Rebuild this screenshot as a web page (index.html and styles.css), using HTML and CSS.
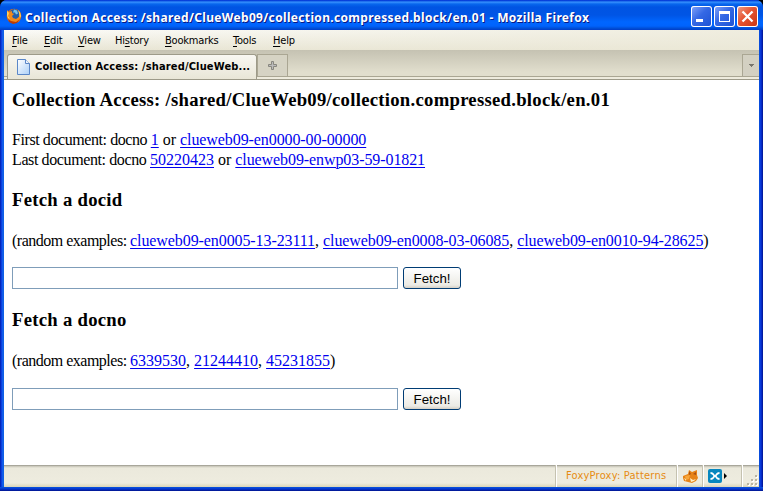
FILE: index.html
```html
<!DOCTYPE html>
<html lang="en">
<head>
<meta charset="utf-8">
<title>Collection Access</title>
<link rel="stylesheet" href="styles.css">
</head>
<body>
<div class="window">
  <header class="titlebar">
    <svg class="logo" width="16" height="16" viewBox="0 0 16 16"><circle cx="8" cy="8" r="7.3" fill="#e66a0c"/><circle cx="8.4" cy="6.3" r="5.2" fill="#245fa8"/><path d="M8 1.500l3 1 1 3-2 1-1-2-2 0z" fill="#75c5ed"/><path d="M1 2l2 2 3-1 0 2 2 1-2 2 1 2 3 1 3-2 1-4 1 3-2 5-5 2-5-2-2-5z" fill="#f28a1b"/><path d="M1 3l2 2-1 3 2 3-2-1-1-3zM12 2l2 2 1 4-1 2-1-5z" fill="#ffd35a"/><path d="M2 11l3 2 5 1 4-3-3 4-4 1-4-2z" fill="#b83b06"/></svg>
    <h1 class="title">Collection Access: /shared/ClueWeb09/collection.compressed.block/en.01 - Mozilla Firefox</h1>
    <div class="controls">
      <svg class="control" width="21" height="21" viewBox="0 0 21 21"><path d="M5 13h7v3H5z" fill="#fff"/></svg>
      <svg class="control" width="21" height="21" viewBox="0 0 21 21"><path d="M5 5h11v11H5zM6 8v7h9V8z" fill="#fff" fill-rule="evenodd"/></svg>
      <svg class="control close" width="21" height="21" viewBox="0 0 21 21"><path d="M5.500 5.500l10 10m0-10l-10 10" stroke="#fff" stroke-width="2.300"/></svg>
    </div>
  </header>
  <nav class="menu">
    <span class="m-file"><u>F</u>ile</span><span class="m-edit"><u>E</u>dit</span><span class="m-view"><u>V</u>iew</span><span class="m-history">Hi<u>s</u>tory</span><span class="m-bookmarks"><u>B</u>ookmarks</span><span class="m-tools"><u>T</u>ools</span><span class="m-help"><u>H</u>elp</span>
  </nav>
  <div class="tabs">
    <div class="tab">
      <svg width="14" height="17" viewBox="0 0 14 17"><defs><linearGradient id="page" x2="1" y2="1"><stop stop-color="#fff"/><stop offset="1" stop-color="#acd0f8"/></linearGradient></defs><path d="M.5.5h8l4 4v11H.5z" fill="url(#page)" stroke="#5b87c8"/><path d="M8.500.5v4h4" fill="#eaf4ff" stroke="#5b87c8"/></svg>
      <span class="tab-name">Collection Access: /shared/ClueWeb...</span>
    </div>
    <div class="new-tab"><svg width="9" height="9" viewBox="0 0 9 9"><path d="M3.500.5h2v3h3v2h-3v3h-2v-3h-3v-2h3z" fill="#bbb" stroke="#88877f"/></svg></div>
    <div class="tab-list"><svg width="5" height="3" viewBox="0 0 5 3"><path d="M0 0h5v1H4v1H3v1H2V2H1V1H0z" fill="#77756c"/></svg></div>
  </div>
  <main class="page">
    <h2 class="heading">Collection Access: /shared/ClueWeb09/collection.compressed.block/en.01</h2>
    <p class="docs"><span class="lead">First document: docno </span><a>1</a> or <a class="id">clueweb09-en0000-00-00000</a><br><span class="lead last">Last document: docno </span><a>50220423</a> or <a class="id">clueweb09-enwp03-59-01821</a></p>
    <h2 class="fetch">Fetch a docid</h2>
    <p class="examples"><span class="prompt">(random examples: </span><a class="id">clueweb09-en0005-13-23111</a>, <a class="id">clueweb09-en0008-03-06085</a>, <a class="id">clueweb09-en0010-94-28625</a>)</p>
    <form class="form"><input type="text" aria-label="docid"><button type="button">Fetch!</button></form>
    <h2 class="fetch second">Fetch a docno</h2>
    <p class="examples"><span class="prompt">(random examples: </span><a>6339530</a>, <a>21244410</a>, <a>45231855</a>)</p>
    <form class="form lower"><input type="text" aria-label="docno"><button type="button">Fetch!</button></form>
  </main>
  <footer class="status">
    <div class="proxy">FoxyProxy: Patterns</div>
    <div class="fox"><svg width="17" height="16" viewBox="0 0 17 16"><path d="M1 8l5-2 1-4 3 2 5-2v5l1 3-2 3-4 2-4-1-4-1-1-3z" fill="#e78316"/><path d="M7 3l2 3-2 1zM14 4l-3 2 3 1z" fill="#ac5010"/><path d="M2 10l2 1v2zM8 10l3 2 3-1-2 2-3 1z" fill="#fff0c4"/><path d="M3 8l5-1-1 4-3 1z" fill="#f7a63b"/></svg></div>
    <div class="addon"><svg width="20" height="14" viewBox="0 0 20 14"><rect width="14" height="14" rx="2" fill="#0787bf"/><path d="M2.500 3C6 3 6 6 7 6s1-3 4.500-3v2C9.500 5 9.500 6 8.500 7c1 1 1 2 3 2v2C8 11 8 8 7 8s-1 3-4.500 3V9c2 0 2-1 3-2-1-1-1-2-3-2z" fill="#fff"/><path d="M16 4v6l3-3z"/></svg></div>
    <div class="grip"><svg width="11" height="11" viewBox="0 0 11 11"><path d="M8 0h2v2H8zM4 4h2v2H4zM8 4h2v2H8zM0 8h2v2H0zM4 8h2v2H4zM8 8h2v2H8z" fill="#b8b4a2"/><path d="M10 1h1v2H9V2h1zM6 5h1v2H5V6h1zM10 5h1v2H9V6h1zM2 9h1v2H1v-1h1zM6 9h1v2H5v-1h1zM10 9h1v2H9v-1h1z" fill="#fff"/></svg></div>
  </footer>
</div>
</body>
</html>
```
FILE: styles.css
```css
* { box-sizing: border-box; }
html { background: #000; }
body { margin: 0; overflow: hidden; }
h1, h2, p { margin: 0; white-space: nowrap; }
.window {
  width: 763px; height: 491px; display: flex; flex-direction: column;
  overflow: hidden; border-radius: 7px 7px 0 0; padding: 0 4px;
  background: linear-gradient(transparent 487px, #0855dd 487px, #0636cf 489px, #00138c 491px), linear-gradient(90deg, #001ea0 0, #0831d9 1px, #166aee 3px, #0855dd 4px, #0855dd 759px, #0831d9 761px, #00138c 763px);
}
.titlebar {
  height: 30px; flex: none; margin: 0 -4px; padding: 0 5px 0 6px; display: flex; align-items: center;
  background: linear-gradient(#0831d9 0, #0750dd 1px, #3a92ff 2px, #0867ed 4px, #0054e3 7px, #0055e5 15px, #0066ff 22px, #0063fc 26px, #0048cc 29px, #003bcc);
}
.logo { flex: none; margin-top: 1px; }
.title {
  flex: 1; margin: 5px 0 0 3px; color: #fff; font: bold 12px/18px "Noto Sans", sans-serif;
  letter-spacing: .335px; text-shadow: 1px 1px #0a1883;
}
.controls { display: flex; gap: 2px; margin-top: 3px; }
.control { display: block; border-radius: 3px; box-shadow: inset 0 0 0 1px #fff; background: linear-gradient(135deg, #85a5fa, #3468e5 45%, #1c51d3); }
.close { background: linear-gradient(135deg, #efa08a, #e65432 45%, #c83310); }
.menu {
  height: 20px; flex: none; display: flex; align-items: center; padding: 1px 0 0 8px;
  background: linear-gradient(90deg, transparent, rgba(236, 233, 216, .8)), linear-gradient(#fbfbf8, #e8e5d4);
  font: 11px/18px "DejaVu Sans Condensed", sans-serif; color: #000;
}
.menu span { display: block; white-space: nowrap; letter-spacing: -.2px; }
.menu u { text-underline-offset: 2px; text-decoration-thickness: 1px; }
.m-file { width: 32px; }
.m-edit { width: 34px; }
.m-view { width: 37px; }
.m-history { width: 50px; }
.m-bookmarks { width: 68px; }
.m-tools { width: 40px; }
.tabs {
  height: 30px; flex: none; display: flex; padding-top: 4px; align-items: flex-start;
  background: linear-gradient(transparent 26px, #aaa693 26px, #aaa693 27px, #eeebdd 27px, #eeebdd 29px, #9d9a89 29px), linear-gradient(#c5c2b2, #e1decd 22px);
}
.tab {
  width: 250px; height: 25px; margin-left: 3px; padding: 0 0 0 9px; display: flex; align-items: center; gap: 4px;
  border: 1px solid #9d9a89; border-bottom: 0; border-radius: 3px 3px 0 0; background: linear-gradient(#f8f7f2, #e9e6d7);
}
.tab-name { font: bold 11px/18px "DejaVu Sans Condensed", sans-serif; letter-spacing: .15px; white-space: nowrap; }
.new-tab { width: 31px; height: 23px; display: flex; align-items: center; justify-content: center; border: 1px solid #aaa693; background: #d6d3c4; }
.tab-list { width: 17px; height: 23px; margin-left: auto; display: flex; align-items: center; justify-content: center; border: 1px solid #aaa693; border-right: 0; background: #d3d0c2; }
.page { height: 385px; flex: none; padding: 9px 8px 0; background: #fff; color: #000; font: 16px/20px "Liberation Serif", serif; }
.heading, .fetch { font: bold 18.7px/22px "Liberation Serif", serif; letter-spacing: .27px; }
.docs { margin-top: 19px; }
.fetch { margin-top: 19px; }
.fetch.second { margin-top: 20px; }
.examples { margin-top: 20px; }
.lead { letter-spacing: -.42px; }
.lead.last { letter-spacing: -.39px; }
.prompt { letter-spacing: -.5px; }
a { color: #00e; text-decoration: underline; text-decoration-thickness: 1px; text-underline-offset: 2px; }
.id { letter-spacing: -.09px; }
.form { display: flex; gap: 5px; margin-top: 16px; height: 22px; }
.form.lower { margin-top: 17px; }
.form input { width: 386px; height: 22px; padding: 1px 3px; border: 1px solid #7f9db9; background: #fff; outline: none; }
.form button { width: 58px; height: 22px; padding: 1px 0 0; border: 1px solid #003c74; border-radius: 3px; background: linear-gradient(#fff, #ecebe5 85%, #d6d0c5); color: #000; font: 13.3px/20px "Liberation Sans", sans-serif; }
.status {
  height: 22px; flex: none; display: flex; color: #e68b12; font: 11px/22px "DejaVu Sans Condensed", sans-serif;
  background: linear-gradient(#8d8b80 0, #c4c2b5 1px, #ebe9dc 3px, #eeecdf 18px, #d9d5b8 22px);
}
.status div { border-left: 1px solid #c5c2b0; box-shadow: inset 1px 0 #fff; }
.proxy { width: 121px; margin-left: 551px; padding-left: 10px; white-space: nowrap; letter-spacing: .22px; }
.fox { width: 26px; padding: 3px 0 0 5px; }
.addon { width: 39px; padding: 4px 0 0 5px; }
.grip { width: 18px; padding: 10px 0 0 5px; }
.status svg { display: block; }
```
